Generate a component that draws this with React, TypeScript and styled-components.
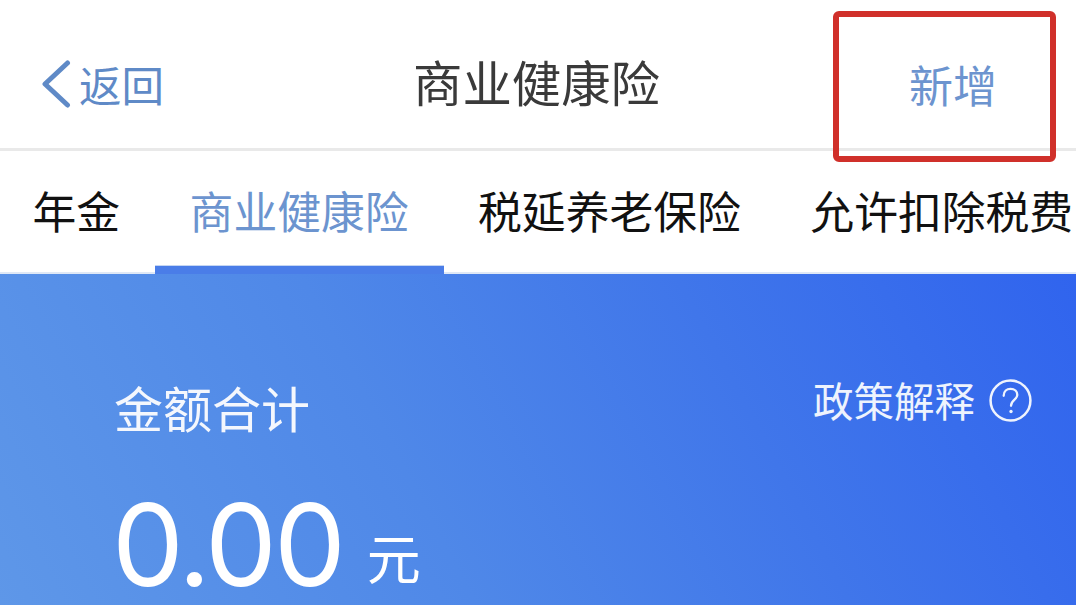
import React from "react";
import styled, { createGlobalStyle } from "styled-components";

const Global = createGlobalStyle`
  html, body { margin: 0; padding: 0; background: #fff; }
  body { font-family: "Noto Sans CJK SC", "Liberation Sans", sans-serif; }
`;

const Page = styled.div`
  position: relative;
  width: 1076px;
  height: 605px;
  overflow: hidden;
  display: flex;
  flex-direction: column;
  background: #fff;
`;

const NavBar = styled.header`
  height: 151px;
  flex: none;
  box-sizing: border-box;
  display: grid;
  grid-template-columns: 1fr auto 1fr;
  align-items: center;
  padding: 20px 41px 0;
  border-bottom: 3px solid #e9e9e9;
`;

const Back = styled.div`
  display: flex;
  align-items: center;
  gap: 7px;
  color: #5f8ac7;
  font-size: 42.5px;
  line-height: 1;
`;

const Title = styled.h1`
  margin: -6px 3px 0 0;
  font-size: 49.4px;
  font-weight: 400;
  line-height: 1;
  color: #3a3a3a;
`;

const Action = styled.div`
  justify-self: end;
  margin-right: 38px;
  font-size: 44px;
  line-height: 1;
  color: #6c94cf;
`;

const Highlight = styled.div`
  position: absolute;
  left: 833px;
  top: 11px;
  width: 223px;
  height: 151px;
  box-sizing: border-box;
  border: 6px solid #d0302a;
  border-radius: 6px;
`;

const Tabs = styled.nav`
  height: 123px;
  flex: none;
  display: flex;
  margin-left: -2px;
  white-space: nowrap;
  box-shadow: inset 0 -2px 0 #dfe8f6;
`;

const Tab = styled.div<{ $active?: boolean }>`
  position: relative;
  flex: none;
  padding: 0 35px 3px 34.5px;
  display: flex;
  align-items: center;
  font-size: 43.8px;
  line-height: 1;
  color: ${(p) => (p.$active ? "#6c94cf" : "#111")};
  &::after {
    content: "";
    display: ${(p) => (p.$active ? "block" : "none")};
    position: absolute;
    left: 0;
    right: 0;
    bottom: 0;
    height: 8px;
    background: #4a7de8;
    box-shadow: 0 -1px 0 #c5d6f2;
  }
`;

const Card = styled.section`
  flex: 1;
  box-sizing: border-box;
  padding: 108px 44px 0 114px;
  background: linear-gradient(62deg, #5e97e8 0%, #4f88e8 38%, #4076ea 68%, #3064ee 100%);
  color: #fff;
`;

const CardTop = styled.div`
  display: flex;
  justify-content: space-between;
  align-items: flex-start;
`;

const CardLabel = styled.div`
  font-size: 49px;
  line-height: 1;
  color: #f4f7fd;
`;

const Policy = styled.div`
  display: flex;
  align-items: center;
  gap: 14px;
  margin-top: -3px;
  font-size: 40.5px;
  line-height: 1;
  color: #eef3fd;
`;

const Amount = styled.div`
  display: flex;
  align-items: flex-end;
  margin-top: 72px;
`;

const Value = styled.span`
  font-family: "Inter", sans-serif;
  font-weight: 400;
  font-size: 114px;
  line-height: 84px;
  letter-spacing: -3px;
  margin-left: -2px;
`;

const Unit = styled.span`
  font-size: 54px;
  line-height: 1;
  margin-left: 24px;
  margin-bottom: 3px;
`;

const Chevron = () => (
  <svg width="31" height="48" viewBox="0 0 31 48" fill="none">
    <path d="M26.5 3 L4 24 L26.5 45" stroke="#5f8ac7" strokeWidth="5" strokeLinecap="round" strokeLinejoin="round" />
  </svg>
);

const HelpIcon = () => (
  <svg width="43" height="43" viewBox="0 0 41 41" fill="none">
    <circle cx="20.5" cy="20.5" r="19" stroke="#eef3fd" strokeWidth="2.4" />
    <path d="M14 16 C14 11.5 17 9.5 20.5 9.5 C24.5 9.5 27 12 27 15.3 C27 19.5 21 20 21 25.5" stroke="#eef3fd" strokeWidth="2.2" strokeLinecap="round" />
    <circle cx="21" cy="31" r="1.6" fill="#eef3fd" />
  </svg>
);

export default function App() {
  return (
    <Page>
      <Global />
      <NavBar>
        <Back>
          <Chevron />
          返回
        </Back>
        <Title>商业健康险</Title>
        <Action>新增</Action>
      </NavBar>
      <Tabs>
        <Tab>年金</Tab>
        <Tab $active>商业健康险</Tab>
        <Tab>税延养老保险</Tab>
        <Tab>允许扣除税费</Tab>
      </Tabs>
      <Card>
        <CardTop>
          <CardLabel>金额合计</CardLabel>
          <Policy>
            政策解释
            <HelpIcon />
          </Policy>
        </CardTop>
        <Amount>
          <Value>0.00</Value>
          <Unit>元</Unit>
        </Amount>
      </Card>
      <Highlight />
    </Page>
  );
}
